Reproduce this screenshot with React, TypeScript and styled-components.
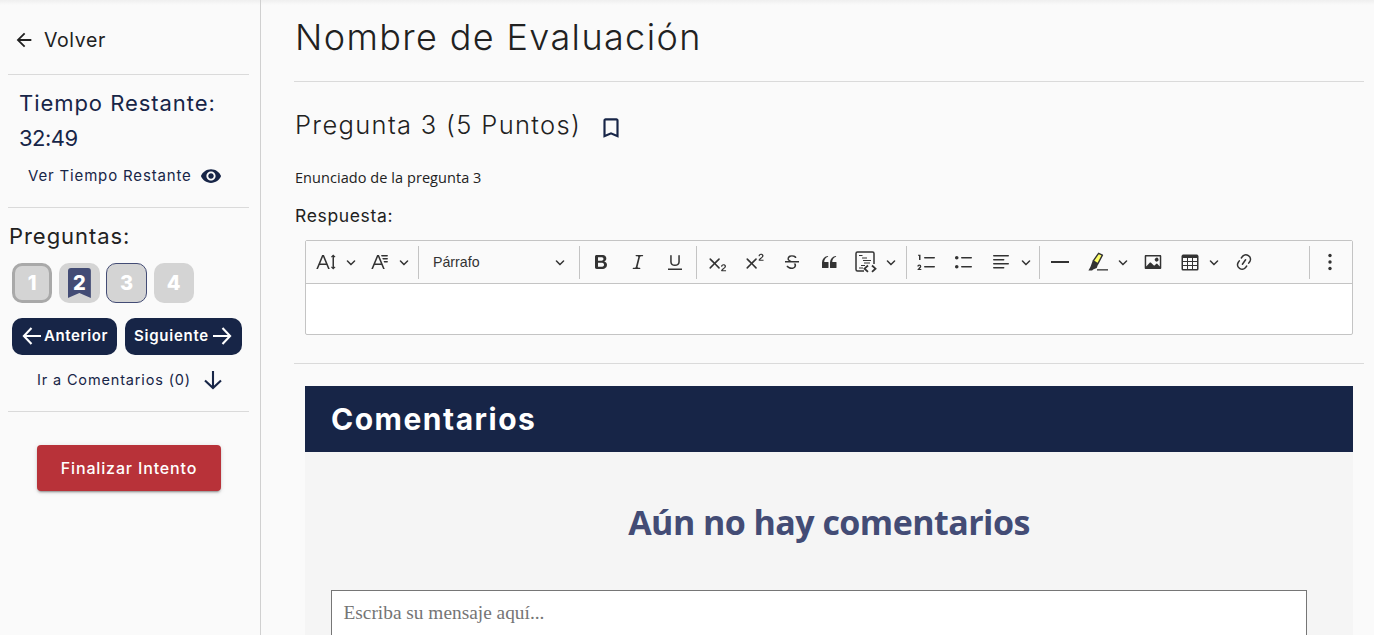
import React from 'react';
import styled, { createGlobalStyle } from 'styled-components';

const navy = '#172547';
const ink = '#212121';
const brand = `Inter, "Open Sans", sans-serif`;

const GlobalStyle = createGlobalStyle`
  *, *::before, *::after { box-sizing: border-box; }
  html, body { margin: 0; padding: 0; height: 100%; overflow: hidden; background: #fafafa; }
  h1, h2, h3, p { margin: 0; font-weight: inherit; }
  button { font: inherit; border: 0; margin: 0; padding: 0; background: none; color: inherit; }
`;

const Page = styled.div`
  display: flex;
  height: 635px;
  overflow: hidden;
  background: linear-gradient(#efefef, #fafafa 5px);
  font-family: ${brand};
  color: ${ink};
`;

const Sidebar = styled.aside`
  display: flex;
  flex-direction: column;
  flex: none;
  width: 261px;
  padding: 0 11px 0 8px;
  border-right: 1px solid #d0d0d0;
`;

const Text = styled.span<{ $size: number; $line: number; $track?: number; $weight?: number; $color?: string }>`
  display: block;
  white-space: nowrap;
  font-size: ${p => p.$size}px;
  line-height: ${p => p.$line}px;
  letter-spacing: ${p => p.$track ?? 0}px;
  font-weight: ${p => p.$weight ?? 400};
  color: ${p => p.$color ?? 'inherit'};
`;

const Divider = styled.hr`
  flex: none;
  width: 100%;
  height: 1px;
  margin: 0;
  border: 0;
  background: #dadada;
`;

const BackLink = styled.a`
  display: flex;
  align-items: center;
  gap: 9px;
  height: 74px;
  padding: 6px 0 0 5px;
`;

const Timer = styled.section`
  height: 132px;
  padding: 11px 0 0 11px;
`;

const TimerToggle = styled.button`
  display: flex;
  align-items: center;
  gap: 8.5px;
  height: 22px;
  margin: 9px 0 0 9px;
`;

const Questions = styled.section`
  height: 203px;
  padding: 13px 0 0 1px;
`;

const QuestionList = styled.div`
  display: flex;
  gap: 6.8px;
  margin: 12px 0 0 3px;
`;

const QuestionBox = styled.button<{ $edge?: string }>`
  display: grid;
  place-items: center;
  width: 40.4px;
  height: 40px;
  border: ${p => p.$edge ?? '0'};
  border-radius: 10px;
  background: #d4d4d4;
  color: #fff;
  font-size: 20px;
  font-weight: 800;
`;

const Flag = styled.span`
  display: grid;
  place-items: center;
  width: 23px;
  height: 30px;
  border-radius: 3px 3px 0 0;
  background: #434c75;
  clip-path: polygon(0 0, 100% 0, 100% 100%, 50% 83%, 0 100%);
`;

const NavRow = styled.div`
  display: flex;
  gap: 8px;
  margin: 15px 0 0 3px;
`;

const NavButton = styled.button<{ $width: number; $end?: boolean }>`
  display: flex;
  align-items: center;
  justify-content: ${p => (p.$end ? 'flex-end' : 'flex-start')};
  gap: ${p => (p.$end ? 3 : 2)}px;
  width: ${p => p.$width}px;
  height: 37px;
  padding: 0 10px 2px;
  border-radius: 10px;
  background: ${navy};
  color: #fff;
`;

const CommentsLink = styled.a`
  display: flex;
  align-items: center;
  gap: 12px;
  height: 26px;
  margin: 12px 0 0 28px;
  color: ${navy};
`;

const FinishButton = styled.button`
  display: grid;
  place-items: center;
  width: 184px;
  height: 46px;
  margin: 33px 0 0 29px;
  padding-bottom: 1px;
  border-radius: 4px;
  background: #b83239;
  color: #fff;
  box-shadow: 0 3px 1px -2px rgba(0,0,0,.2), 0 2px 2px rgba(0,0,0,.14), 0 1px 5px rgba(0,0,0,.12);
`;

const Main = styled.main`
  flex: 1;
  min-width: 0;
  padding: 0 10px 0 33px;
`;

const TitleBar = styled.header`
  height: 81px;
  padding: 14px 0 0 1px;
`;

const Question = styled.section`
  height: 281px;
`;

const QuestionHead = styled.div`
  display: flex;
  align-items: flex-end;
  gap: 17px;
  height: 60px;
  padding: 0 0 0 1px;
`;

const QuestionTitle = styled.div`
  padding-bottom: 2px;
`;

const BookmarkButton = styled.button`
  padding-bottom: 1px;
`;

const Statement = styled.p`
  margin: 26px 0 0 1px;
  font: 14.5px/20px "Open Sans", sans-serif;
  letter-spacing: 0.06px;
`;

const AnswerLabel = styled.div`
  padding: 14px 0 0 1px;
`;

const Editor = styled.div`
  width: 1048px;
  height: 95px;
  margin: 10px 0 0 11px;
  border: 1px solid #c4c4c4;
  border-radius: 2px;
  background: #fff;
`;

const Toolbar = styled.div`
  display: flex;
  align-items: center;
  height: 43px;
  padding-right: 3px;
  border-bottom: 1px solid #c4c4c4;
  background: #fafafa;
  color: #333;
`;

const Tool = styled.button`
  display: grid;
  place-items: center;
  flex: none;
  width: 37.2px;
  height: 34px;
`;

const Split = styled.button<{ $w: number; $inset: number }>`
  display: flex;
  align-items: center;
  gap: 9.5px;
  flex: none;
  width: ${p => p.$w}px;
  height: 34px;
  padding-left: ${p => p.$inset}px;
`;

const StyleSelect = styled.button`
  display: flex;
  align-items: center;
  justify-content: space-between;
  flex: none;
  width: 156px;
  height: 34px;
  padding: 0 12px;
  font: 14.2px/20px "Liberation Sans", Arial, sans-serif;
`;

const Bar = styled.span`
  flex: none;
  width: 1px;
  height: 33px;
  margin: 0 2px;
  background: #c4c4c4;
`;

const Spring = styled.span`
  flex: 1;
`;

const Comments = styled.section`
  width: 1048px;
  height: 260px;
  margin: 22px 0 0 11px;
  background: #f5f5f5;
`;

const CommentsHead = styled.header`
  height: 66px;
  padding: 13px 0 0 26px;
  background: ${navy};
  color: #fff;
`;

const Empty = styled.p`
  height: 138px;
  padding-top: 46px;
  text-align: center;
  white-space: nowrap;
  font: 700 34px/48px "Open Sans", sans-serif;
  letter-spacing: -0.55px;
  color: #434c75;
`;

const Message = styled.textarea`
  display: block;
  width: 976px;
  height: 80px;
  margin: 0 0 0 26px;
  padding: 10px 11.5px;
  border: 1px solid #767676;
  border-radius: 0;
  resize: none;
  background: #fff;
  font: 19.35px/24px "Liberation Serif", "Times New Roman", serif;
  &::placeholder { color: #757575; }
`;

const Svg = styled.svg`
  display: block;
  flex: none;
`;

const Icon = ({ d, size = 20, box = 20, color = 'currentColor' }: { d: string; size?: number; box?: number; color?: string }) => (
  <Svg width={size} height={size} viewBox={`0 0 ${box} ${box}`} fill={color}><path d={d} /></Svg>
);

const paths = {
  back: 'M20 11H7.83l5.59-5.59L12 4l-8 8 8 8 1.41-1.41L7.83 13H20v-2z',
  eye: 'M12 4.5C7 4.5 2.73 7.61 1 12c1.73 4.39 6 7.5 11 7.5s9.27-3.11 11-7.5c-1.73-4.39-6-7.5-11-7.5zM12 17c-2.76 0-5-2.24-5-5s2.24-5 5-5 5 2.24 5 5-2.24 5-5 5zm0-8c-1.66 0-3 1.34-3 3s1.34 3 3 3 3-1.34 3-3-1.34-3-3-3z',
  bookmark: 'M17 3H7c-1.1 0-1.99.9-1.99 2L5 21l7-3 7 3V5c0-1.1-.9-2-2-2zm0 15l-5-2.18L7 18V5h10v13z',
  fontSize: 'M9.816 11.5 7.038 4.785 4.261 11.5h5.555Zm.62 1.5H3.641l-1.666 4.028H.312l5.789-14h1.875l5.789 14h-1.663L10.436 13Zm7.55 2.279.779-.779.707.707-2.265 2.265-2.193-2.265.707-.707.765.765V4.825c0-.042 0-.083.002-.123l-.77.77-.707-.707L17.207 2.5l2.265 2.265-.707.707-.782-.782c.002.043.003.089.003.135v10.454Z',
  fontFamily: 'M11.03 3h6.149a.75.75 0 1 1 0 1.5h-5.514L11.03 3Zm1.27 3h4.879a.75.75 0 1 1 0 1.5h-4.244L12.3 6Zm1.27 3h3.609a.75.75 0 1 1 0 1.5h-2.973L13.57 9Zm-2.754 2.5L8.038 4.785 5.261 11.5h5.555Zm.62 1.5H4.641l-1.666 4.028H1.312l5.789-14h1.875l5.789 14h-1.663L11.436 13Z',
  bold: 'M10.187 17H5.773c-.637 0-1.092-.138-1.364-.415-.273-.277-.409-.718-.409-1.323V4.738c0-.617.14-1.062.419-1.332.279-.27.73-.406 1.354-.406h4.68c.69 0 1.288.041 1.793.124.506.083.96.242 1.36.477.341.197.644.447.906.75a3.262 3.262 0 0 1 .808 2.162c0 1.401-.722 2.426-2.167 3.075C15.05 10.175 16 11.315 16 13.01a3.756 3.756 0 0 1-2.296 3.504 6.1 6.1 0 0 1-1.517.377c-.571.073-1.238.11-2 .11zm-.217-6.217H7v4.087h3.069c1.977 0 2.965-.69 2.965-2.072 0-.707-.256-1.22-.768-1.537-.512-.319-1.277-.478-2.296-.478zM7 5.13v3.619h2.606c.729 0 1.292-.067 1.69-.2a1.6 1.6 0 0 0 .91-.765c.165-.267.247-.566.247-.897 0-.707-.26-1.176-.778-1.409-.519-.232-1.31-.348-2.375-.348H7z',
  italic: 'm9.586 14.633.021.004c-.036.335.095.655.393.962.082.083.173.15.274.201h1.474a.6.6 0 1 1 0 1.2H5.304a.6.6 0 0 1 0-1.2h1.15c.474-.07.809-.182 1.005-.334.157-.122.291-.32.404-.597l2.416-9.55a1.053 1.053 0 0 0-.281-.823 1.12 1.12 0 0 0-.442-.296H8.15a.6.6 0 0 1 0-1.2h6.443a.6.6 0 1 1 0 1.2h-1.195c-.376.056-.65.155-.823.296-.215.175-.423.439-.623.79l-2.366 9.347z',
  underline: 'M3 18v-1.5h14V18H3zm2.2-8V3.6c0-.4.4-.6.8-.6.3 0 .7.2.7.6v6.2c0 2 1.3 2.8 3.2 2.8 1.9 0 3.4-.9 3.4-2.9V3.6c0-.3.4-.5.8-.5.3 0 .7.2.7.5V10c0 2.7-2.2 4-4.9 4-2.6 0-4.7-1.2-4.7-4z',
  cross: 'm7.03 10.349 3.818-3.819a.8.8 0 1 1 1.132 1.132L8.16 11.48l3.819 3.818a.8.8 0 1 1-1.132 1.132L7.03 12.61l-3.818 3.82a.8.8 0 1 1-1.132-1.132L5.9 11.48 2.08 7.662A.8.8 0 1 1 3.212 6.53l3.818 3.82z',
  two: 'M15.177 18.178h2.549c.254 0 .447.05.58.152a.49.49 0 0 1 .201.413.54.54 0 0 1-.159.393c-.105.108-.266.162-.48.162h-3.594c-.245 0-.435-.066-.572-.197a.621.621 0 0 1-.205-.463c0-.114.044-.265.132-.453a1.62 1.62 0 0 1 .288-.444c.433-.436.824-.81 1.172-1.122.348-.312.597-.517.747-.615.267-.183.49-.368.667-.553.177-.185.312-.375.405-.57.093-.194.139-.384.139-.57a1.008 1.008 0 0 0-.554-.917 1.197 1.197 0 0 0-.56-.133c-.426 0-.761.182-1.005.546a2.332 2.332 0 0 0-.164.39 1.609 1.609 0 0 1-.258.488c-.096.114-.237.17-.423.17a.558.558 0 0 1-.405-.156.568.568 0 0 1-.161-.427c0-.218.05-.446.151-.683.101-.238.252-.453.452-.646s.454-.349.762-.467a2.998 2.998 0 0 1 1.081-.178c.498 0 .923.076 1.274.228a1.916 1.916 0 0 1 1.004 1.032 1.984 1.984 0 0 1-.156 1.794c-.2.32-.405.572-.613.754-.208.182-.558.468-1.048.857-.49.39-.826.691-1.008.906a2.703 2.703 0 0 0-.24.309z',
  strike: 'M7 16.4c-.8-.4-1.5-.9-2.2-1.5a.6.6 0 0 1-.2-.5l.3-.6h1c1 1.2 2.1 1.7 3.7 1.7 1 0 1.8-.3 2.3-.6.6-.4.6-1.2.6-1.3.2-1.2-.9-2.1-.9-2.1h2.1c.3.7.4 1.2.4 1.7v.8l-.6 1.2c-.6.8-1.1 1-1.6 1.2a6 6 0 0 1-2.4.6c-1 0-1.8-.3-2.5-.6zM6.8 9 6 8.3c-.4-.5-.5-.8-.5-1.6 0-.7.1-1.3.5-1.8.4-.6 1-1 1.6-1.3a6.3 6.3 0 0 1 4.7 0 4 4 0 0 1 1.7 1l.3.7c0 .1.2.4-.2.7-.4.2-.9.1-1 0a3 3 0 0 0-1.2-1c-.4-.2-1-.3-2-.4-.7 0-1.4.2-2 .6-.8.6-1 .8-1 1.5 0 .8.5 1 1.2 1.5.6.4 1.1.7 1.9 1H6.8zM3 10.5V9h14v1.5z',
  quote: 'M3 10.423a6.5 6.5 0 0 1 6.056-6.408l.038.67C6.448 5.423 5.354 7.663 5.22 10H9c.552 0 .5.432.5.986v4.511c0 .554-.448.503-1 .503h-5c-.552 0-.5-.449-.5-1.003v-4.574zm8 0a6.5 6.5 0 0 1 6.056-6.408l.038.67c-2.646.739-3.74 2.979-3.873 5.315H17c.552 0 .5.432.5.986v4.511c0 .554-.448.503-1 .503h-5c-.552 0-.5-.449-.5-1.003v-4.574z',
  numbered: 'M7 5.75c0 .414.336.75.75.75h9.5a.75.75 0 1 0 0-1.5h-9.5a.75.75 0 0 0-.75.75zM3.5 3v5H2V3.7H1v-1h2.5V3zM.343 17.857l2.59-3.257H2.92a.6.6 0 1 0-1.04 0H.302a2 2 0 1 1 3.995 0h-.001c-.048.405-.16.734-.333.988-.175.254-.59.692-1.244 1.312H4.3v1h-4l.043-.043zM7 14.75a.75.75 0 0 1 .75-.75h9.5a.75.75 0 1 1 0 1.5h-9.5a.75.75 0 0 1-.75-.75z',
  bulleted: 'M7 5.75c0 .414.336.75.75.75h9.5a.75.75 0 1 0 0-1.5h-9.5a.75.75 0 0 0-.75.75zm-6 0C1 4.784 1.777 4 2.75 4c.966 0 1.75.777 1.75 1.75 0 .966-.777 1.75-1.75 1.75C1.784 7.5 1 6.723 1 5.75zm6 9c0 .414.336.75.75.75h9.5a.75.75 0 1 0 0-1.5h-9.5a.75.75 0 0 0-.75.75zm-6 0c0-.966.777-1.75 1.75-1.75.966 0 1.75.777 1.75 1.75 0 .966-.777 1.75-1.75 1.75-.966 0-1.75-.777-1.75-1.75z',
  align: 'M2 3.75c0 .414.336.75.75.75h14.5a.75.75 0 1 0 0-1.5H2.75a.75.75 0 0 0-.75.75zm0 8c0 .414.336.75.75.75h14.5a.75.75 0 1 0 0-1.5H2.75a.75.75 0 0 0-.75.75zm0 4c0 .414.336.75.75.75h9.929a.75.75 0 1 0 0-1.5H2.75a.75.75 0 0 0-.75.75zm0-8c0 .414.336.75.75.75h9.929a.75.75 0 1 0 0-1.5H2.75a.75.75 0 0 0-.75.75z',
  rule: 'M1 9h18v2H1z',
  image: 'M6.91 10.54c.26-.23.64-.21.88.03l3.36 3.14 2.23-2.06a.64.64 0 0 1 .87 0l2.52 2.97V4.5H3.2v10.12l3.71-4.08zm10.27-7.51c.6 0 1.09.47 1.09 1.05v11.84c0 .59-.49 1.06-1.09 1.06H2.79c-.6 0-1.09-.47-1.09-1.06V4.08c0-.58.49-1.05 1.1-1.05h14.38zm-5.22 5.56a1.96 1.96 0 1 1 3.4-1.96 1.96 1.96 0 0 1-3.4 1.96z',
  table: 'M3 6v3h4V6H3zm0 4v3h4v-3H3zm0 4v3h4v-3H3zm5 3h4v-3H8v3zm5 0h4v-3h-4v3zm4-4v-3h-4v3h4zm0-4V6h-4v3h4zm1.5 8a1.5 1.5 0 0 1-1.5 1.5H3A1.5 1.5 0 0 1 1.5 17V4c.222-.863 1.068-1.5 2-1.5h13c.932 0 1.778.637 2 1.5v13zM12 13v-3H8v3h4zm0-4V6H8v3h4z',
  link: 'm11.077 15 .991-1.416a.75.75 0 1 1 1.229.86l-1.148 1.64a.748.748 0 0 1-.217.206 5.251 5.251 0 0 1-8.503-5.955.741.741 0 0 1 .12-.274l1.147-1.639a.75.75 0 1 1 1.228.86L4.933 10.7l.006.003a3.75 3.75 0 0 0 6.132 4.294l.006.004zm5.494-5.335a.748.748 0 0 1-.12.274l-1.147 1.639a.75.75 0 1 1-1.228-.86l.86-1.23a3.75 3.75 0 0 0-6.144-4.301l-.86 1.229a.75.75 0 0 1-1.229-.86l1.148-1.64a.748.748 0 0 1 .217-.206 5.251 5.251 0 0 1 8.503 5.955zm-4.563-2.532a.75.75 0 0 1 .184 1.045l-3.155 4.505a.75.75 0 1 1-1.229-.86l3.155-4.506a.75.75 0 0 1 1.045-.184z',
  caret: 'M.941 4.523a.75.75 0 1 1 1.06-1.06l3.006 3.005 3.005-3.005a.75.75 0 1 1 1.06 1.06l-3.549 3.55a.75.75 0 0 1-1.168-.136L.941 4.523z',
};

const Caret = () => <Icon d={paths.caret} size={10} box={10} />;

const Script = ({ raised = false }: { raised?: boolean }) => (
  <Svg width="20" height="20" viewBox="-0.6 0 20 20" fill="currentColor">
    <path d={paths.cross} />
    <path d={paths.two} transform={raised ? 'translate(.5 -10.5)' : undefined} />
  </Svg>
);

const Arrow = ({ turn = 0 }: { turn?: number }) => (
  <Svg width="20" height="20" viewBox="0 0 20 20" fill="none" stroke="currentColor" strokeWidth="2.1">
    <path d="M2 10H19M9.5 2 1.9 10l7.6 8" transform={`rotate(${turn} 10 10)`} />
  </Svg>
);

const CodeBlock = () => (
  <Svg width="22" height="22" viewBox="0 0 22 22" fill="none" stroke="currentColor">
    <path d="M9 20H2.5A1.5 1.5 0 0 1 1 18.5V2.5A1.5 1.5 0 0 1 2.5 1h15A1.5 1.5 0 0 1 19 2.5V13" strokeWidth="1.5" />
    <path d="M4 4.500h3.500M7 7h5M8 9.500h8M9 12h6M6 14.500h4M4 17h4" />
    <path d="m13 14.500-3.500 3.200 3.500 3.200M17 14.500l3.500 3.200-3.500 3.200" strokeWidth="1.8" />
  </Svg>
);

const Marker = () => (
  <Svg width="20" height="20" viewBox="0 0 20 20">
    <path d="M10.600 1.300 14.400 3.200l-4.600 8.600-4.500-3z" fill="#fdff67" stroke="#333" strokeWidth="1.4" strokeLinejoin="round" />
    <path d="m4.800 8.500 5.400 3.400-1.500 4-3.600 1.600-1 .9H.4l2-3.400z" fill="#333" />
    <path d="M9 17.200h11v1.300H9z" fill="#333" />
  </Svg>
);

const Dots = () => (
  <Svg width="20" height="20" viewBox="0 0 20 20" fill="currentColor">
    <circle cx="10" cy="3.5" r="1.7" /><circle cx="10" cy="10" r="1.7" /><circle cx="10" cy="16.5" r="1.7" />
  </Svg>
);

export default function App() {
  return (
    <>
      <GlobalStyle />
      <Page>
        <Sidebar>
          <BackLink>
            <Icon d={paths.back} box={24} size={22} />
            <Text $size={19.5} $line={28} $track={0.6}>Volver</Text>
          </BackLink>
          <Divider />
          <Timer>
            <Text as="h2" $size={22} $line={35} $track={0.95} $color={navy}>Tiempo Restante:</Text>
            <Text $size={22} $line={35} $track={-0.5} $color={navy}>32:49</Text>
            <TimerToggle>
              <Text $size={15} $line={22} $track={0.84} $color={navy}>Ver Tiempo Restante</Text>
              <Icon d={paths.eye} box={24} size={22} color={navy} />
            </TimerToggle>
          </Timer>
          <Divider />
          <Questions>
            <Text as="h2" $size={22} $line={30} $track={0.95}>Preguntas:</Text>
            <QuestionList>
              <QuestionBox $edge="3px solid #a9a9a9">1</QuestionBox>
              <QuestionBox><Flag>2</Flag></QuestionBox>
              <QuestionBox $edge="1px solid #434c75">3</QuestionBox>
              <QuestionBox>4</QuestionBox>
            </QuestionList>
            <NavRow>
              <NavButton $width={105}>
                <Arrow />
                <Text $size={15} $line={20} $track={0.6} $weight={600}>Anterior</Text>
              </NavButton>
              <NavButton $width={117} $end>
                <Text $size={15} $line={20} $track={0.75} $weight={600}>Siguiente</Text>
                <Arrow turn={180} />
              </NavButton>
            </NavRow>
            <CommentsLink>
              <Text $size={14.5} $line={22} $track={0.85}>Ir a Comentarios (0)</Text>
              <Arrow turn={-90} />
            </CommentsLink>
          </Questions>
          <Divider />
          <FinishButton>
            <Text $size={16} $line={24} $track={0.85} $weight={500}>Finalizar Intento</Text>
          </FinishButton>
        </Sidebar>
        <Main>
          <TitleBar>
            <Text as="h1" $size={36} $line={46} $track={1.38} $weight={300}>Nombre de Evaluación</Text>
          </TitleBar>
          <Divider />
          <Question>
            <QuestionHead>
              <QuestionTitle>
                <Text as="h2" $size={25.5} $line={30} $track={1.33} $weight={300}>Pregunta 3 (5 Puntos)</Text>
              </QuestionTitle>
              <BookmarkButton><Icon d={paths.bookmark} box={24} size={26} color={navy} /></BookmarkButton>
            </QuestionHead>
            <Statement>Enunciado de la pregunta 3</Statement>
            <AnswerLabel>
              <Text $size={17.5} $line={28} $track={0.65}>Respuesta:</Text>
            </AnswerLabel>
            <Editor>
              <Toolbar>
                <Split $w={58.5} $inset={10}><Icon d={paths.fontSize} /><Caret /></Split>
                <Split $w={51.5} $inset={5}><Icon d={paths.fontFamily} /><Caret /></Split>
                <Bar />
                <StyleSelect>Párrafo<Caret /></StyleSelect>
                <Bar />
                <Tool><Icon d={paths.bold} /></Tool>
                <Tool><Icon d={paths.italic} /></Tool>
                <Tool><Icon d={paths.underline} /></Tool>
                <Bar />
                <Tool><Script /></Tool>
                <Tool><Script raised /></Tool>
                <Tool><Icon d={paths.strike} /></Tool>
                <Tool><Icon d={paths.quote} /></Tool>
                <Split $w={56.4} $inset={7.6}><CodeBlock /><Caret /></Split>
                <Bar />
                <Tool><Icon d={paths.numbered} /></Tool>
                <Tool><Icon d={paths.bulleted} /></Tool>
                <Split $w={53.8} $inset={8.2}><Icon d={paths.align} /><Caret /></Split>
                <Bar />
                <Tool><Icon d={paths.rule} /></Tool>
                <Split $w={55.2} $inset={9}><Marker /><Caret /></Split>
                <Tool><Icon d={paths.image} /></Tool>
                <Split $w={53.8} $inset={8.2}><Icon d={paths.table} /><Caret /></Split>
                <Tool><Icon d={paths.link} /></Tool>
                <Spring />
                <Bar />
                <Tool><Dots /></Tool>
              </Toolbar>
            </Editor>
          </Question>
          <Divider />
          <Comments>
            <CommentsHead>
              <Text as="h2" $size={30} $line={40} $weight={750} $track={1.5}>Comentarios</Text>
            </CommentsHead>
            <Empty>Aún no hay comentarios</Empty>
            <Message placeholder="Escriba su mensaje aquí..." />
          </Comments>
        </Main>
      </Page>
    </>
  );
}
